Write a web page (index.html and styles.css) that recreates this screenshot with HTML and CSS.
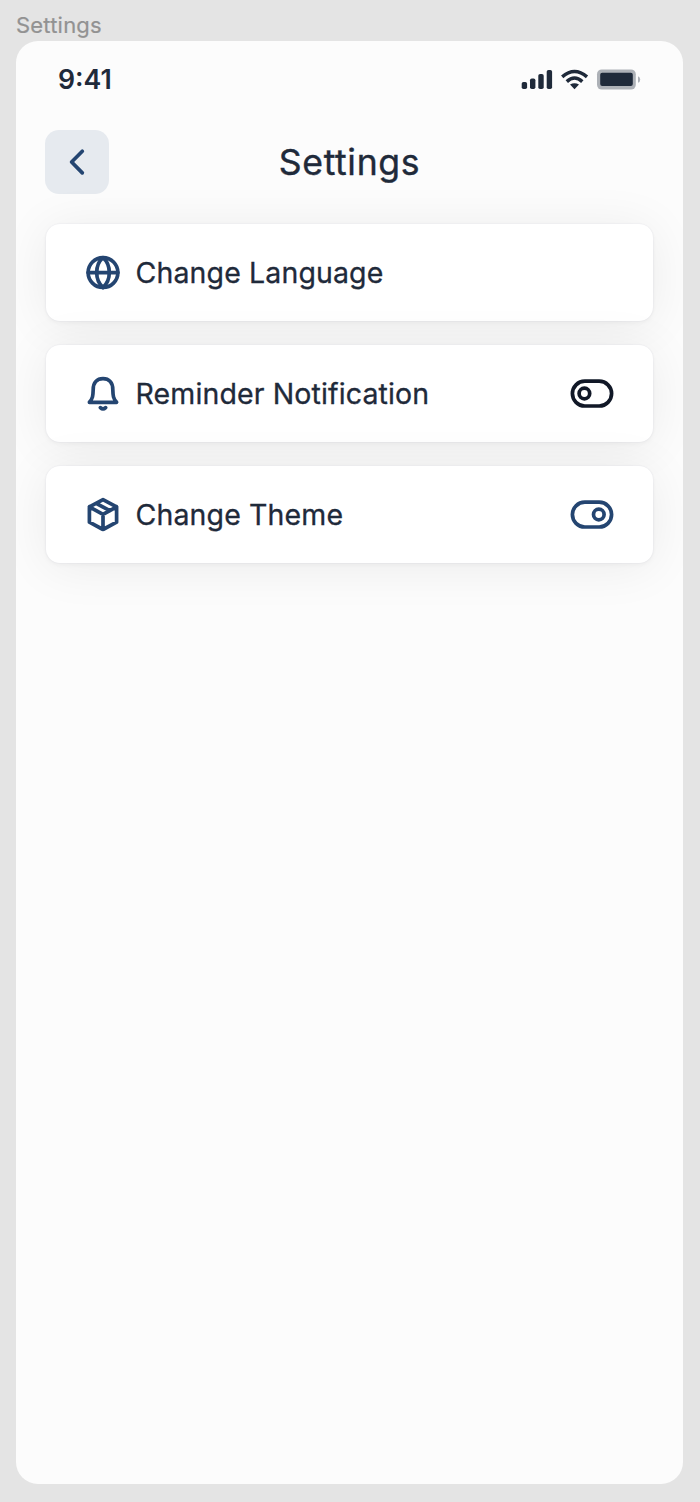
FILE: index.html
```html
<!DOCTYPE html>
<html lang="en">
<head>
<meta charset="utf-8">
<title>Settings</title>
<link rel="stylesheet" href="styles.css">
</head>
<body>
<div class="frame-label"><span class="label-text">Settings</span></div>
<main class="screen">
  <div class="status-bar">
    <span class="time">9:41</span>
    <svg class="status-icons" viewBox="0 0 120 22" aria-hidden="true">
      <g fill="#1f2a3a">
        <rect x="0.7" y="13" width="5.4" height="7" rx="1.8"/>
        <rect x="9" y="9.5" width="5.4" height="10.5" rx="1.8"/>
        <rect x="17.3" y="5" width="5.4" height="15" rx="1.8"/>
        <rect x="25.7" y="1" width="5.4" height="19" rx="1.8"/>
        <path d="M49 15.6Q53.5 12.8 58 15.6L53.5 20.2Z"/>
      </g>
      <g fill="none" stroke="#1f2a3a" stroke-width="3.5">
        <path d="M41.2 7.8Q53.5 -2.8 66 7.8"/>
        <path d="M45.8 12.6Q53.5 5.4 61.3 12.6"/>
      </g>
      <rect x="76" y="0.4" width="38.8" height="20.2" rx="4.8" fill="#adb1b7"/>
      <rect x="79.2" y="3.8" width="32.6" height="13.3" rx="2" fill="#1f2a3a"/>
      <path d="M117 7.3Q119.2 8 119.2 10.5T117 13.7Z" fill="#adb1b7"/>
    </svg>
  </div>
  <header class="header">
    <button class="back" aria-label="Back">
      <svg class="back-icon" viewBox="0 0 24 30"><path d="M17.3 4.2 6.6 15l10.7 10.9"/></svg>
    </button>
    <h1 class="title">Settings</h1>
  </header>
  <section class="cards">
    <div class="card">
      <svg class="icon" viewBox="0 0 36 36"><circle cx="18" cy="17.6" r="14.9"/><path d="M18 2.7C9.6 10 9.6 25.2 18 32.5C26.4 25.2 26.4 10 18 2.7ZM3.1 17.6h29.8"/></svg>
      <span class="name">Change Language</span>
    </div>
    <div class="card">
      <svg class="icon" viewBox="0 0 36 36"><path d="M4.4 26.3C7.8 22.4 8 20 8.2 13.5C8.2 6.5 12 2.7 18 2.7S27.8 6.5 27.8 13.5C28 20 28.2 22.4 31.6 26.3Z"/><path d="M15.4 31.6Q18 34.2 20.6 31.6"/></svg>
      <span class="name">Reminder Notification</span>
      <svg class="toggle" viewBox="0 0 44 30"><rect x="2.4" y="2.2" width="39.2" height="24.8" rx="12.4"/><circle cx="14.4" cy="14.5" r="5.3"/></svg>
    </div>
    <div class="card">
      <svg class="icon" viewBox="0 0 36 36"><path d="M18 2.7 31.6 9.8V25.2L18 32.5 4.4 25.2V9.8ZM4.4 9.8 18 17.4 31.6 9.8M18 17.4V32.5M11.2 6.4 24.8 13.7"/></svg>
      <span class="name">Change Theme</span>
      <svg class="toggle toggle-on" viewBox="0 0 44 30"><rect x="2.4" y="2.2" width="39.2" height="24.8" rx="12.4"/><circle cx="28.8" cy="14.5" r="5.3"/></svg>
    </div>
  </section>
</main>
</body>
</html>
```
FILE: styles.css
```css
* { box-sizing: border-box; }
body {
  margin: 0;
  height: 1502px;
  padding: 0 17px 18px 16px;
  background: #e4e4e4;
  font-family: Inter, "Liberation Sans", sans-serif;
  font-optical-sizing: none;
  color: #1f2a3a;
  display: flex;
  flex-direction: column;
}
.frame-label {
  height: 41px;
  padding-top: 11px;
  font-size: 22px;
  line-height: 28px;
  letter-spacing: 0.2px;
  color: #929292;
  -webkit-text-stroke: 0.2px #929292;
}
.screen {
  flex: 1;
  background: #fcfcfc;
  border-radius: 22px;
  overflow: hidden;
}
.status-bar {
  height: 89px;
  padding: 21px 42px 0 42px;
  display: flex;
  justify-content: space-between;
}
.time {
  font-size: 26.7px;
  font-weight: 600;
  line-height: 34px;
}
.status-icons {
  width: 120px;
  height: 22px;
  margin-top: 7px;
}
.header {
  height: 64px;
  margin: 0 29px;
  display: grid;
  grid-template-columns: 64px 1fr 64px;
  align-items: center;
}
.back {
  width: 64px;
  height: 64px;
  padding: 0;
  border: 0;
  border-radius: 14px;
  background: #e6eaef;
  display: flex;
  align-items: center;
  justify-content: center;
}
.back-icon { width: 24px; height: 30px; }
.title {
  margin: 0;
  padding-top: 2px;
  text-align: center;
  font-size: 35.6px;
  font-weight: 400;
  line-height: 48px;
  letter-spacing: 0.65px;
  -webkit-text-stroke: 0.4px #1f2a3a;
}
.cards {
  margin: 30px 30px 0;
  display: flex;
  flex-direction: column;
  gap: 24px;
}
.card {
  height: 97px;
  padding: 0 39px 0 39.5px;
  border-radius: 14px;
  background: #fff;
  box-shadow: 0 0 2px rgba(40, 41, 100, .08), 0 2px 4px rgba(40, 41, 61, .04), 0 4px 50px rgba(0, 0, 0, .07);
  display: flex;
  align-items: center;
}
.icon { width: 36px; height: 36px; margin: 0 14.5px 0 -0.5px; }
.name {
  flex: 1;
  font-size: 28.5px;
  font-weight: 400;
  line-height: 40px;
  letter-spacing: 0.13px;
  -webkit-text-stroke: 0.3px #1f2a3a;
}
.toggle { width: 44px; height: 30px; color: #111827; }
.toggle-on { color: #244571; }
.icon, .back-icon, .toggle {
  fill: none;
  stroke: #244571;
  stroke-width: 3.7;
  stroke-linecap: round;
  stroke-linejoin: round;
}
.toggle { stroke: currentColor; }
```
